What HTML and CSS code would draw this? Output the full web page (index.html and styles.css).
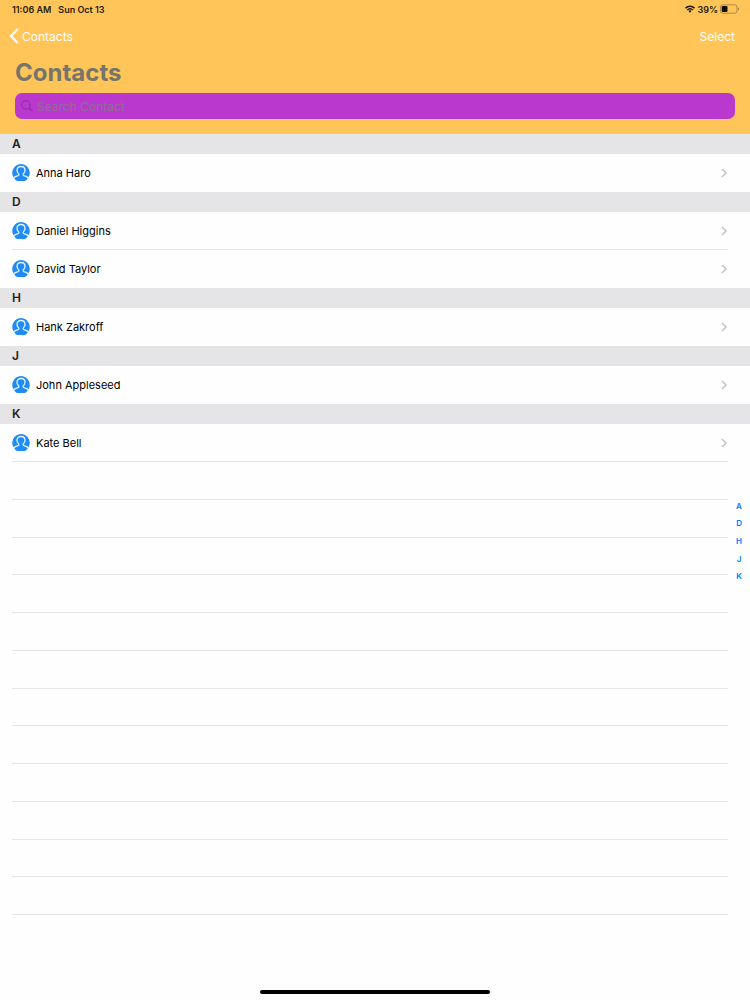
FILE: index.html
```html
<!DOCTYPE html>
<html lang="en">
<head>
  <meta charset="UTF-8" />
  <meta name="viewport" content="width=device-width, initial-scale=1" />
  <title>Contacts</title>
  <link rel="stylesheet" href="styles.css">
</head>
<body>

<!-- Shared icons -->
<svg class="sprite" aria-hidden="true">
  <symbol id="avatar" viewBox="0 0 36 36">
    <path d="M18 0a17.800 17.800 0 0 1 12.500 30q-2 4-5.500 4H11q-3.500 0-5.500-4A17.800 17.800 0 0 1 18 0z" fill="#1f8cf5"/>
    <path d="M3.500 27.500c2-2.800 5.500-3 8.500-4.200 2.800-1.200 2-2.800.5-4.500-1.500-2-2.500-4-2.500-6.500C10 7.800 13.200 5 18 5s8 2.800 8 7.300c0 2.500-1 4.500-2.500 6.500-1.500 1.700-2.300 3.300.5 4.500 3 1.200 6.500 1.400 8.500 4.200" fill="none" stroke="#e4f2ff" stroke-width="2.600"/>
  </symbol>
  <symbol id="chevron" viewBox="0 0 6 10">
    <path d="M1 1l4 4-4 4" fill="none" stroke="#bfbdc5" stroke-width="1.400"/>
  </symbol>
</svg>

<header class="navbar">
  <div class="statusBar">
    <div class="statusLeft">
      <span>11:06 AM</span>
      <span>Sun Oct 13</span>
    </div>
    <div class="statusRight">
      <svg class="wifi" viewBox="0 0 20 16" aria-hidden="true">
        <g fill="none" stroke="#1b1508" stroke-width="3">
          <path d="M1 6.300a13 13 0 0 1 18 0"/>
          <path d="M4.500 10a8 8 0 0 1 11 0"/>
        </g>
        <path d="M7 12.200a4.300 4.300 0 0 1 6 0L10 15.500z" fill="#1b1508"/>
      </svg>
      <span>39%</span>
      <svg class="battery" viewBox="0 0 20 10" aria-hidden="true">
        <rect x="0.500" y="0.800" width="16.500" height="8.400" rx="2.200" fill="none" stroke="#a8823f" stroke-width="0.900"/>
        <rect x="1.700" y="2" width="5.800" height="6" rx="1" fill="#120d02"/>
        <path d="M18 3.500q1.200.3 1.200 1.500t-1.200 1.500z" fill="#a8823f"/>
      </svg>
    </div>
  </div>

  <div class="navActions">
    <button class="navBtn" type="button">
      <svg class="backIcon" viewBox="0 0 10 16" aria-hidden="true">
        <path d="M8.700 1L2 8l6.700 7" fill="none" stroke="#fff" stroke-width="2.200"/>
      </svg>
      Contacts
    </button>
    <button class="navBtn" type="button">Select</button>
  </div>

  <h1>Contacts</h1>

  <label class="search">
    <svg class="searchIcon" viewBox="0 0 12 12" aria-hidden="true">
      <circle cx="5" cy="5" r="4.200" fill="none" stroke="#84309a" stroke-width="1.100"/>
      <path d="M8.100 8.100l3.300 3.300" stroke="#84309a" stroke-width="1.300"/>
    </svg>
    <input type="text" placeholder="Search Contact" aria-label="Search Contact">
  </label>
</header>

<main class="contacts">
  <section>
    <h2 id="A">A</h2>
    <ul>
      <li><svg class="avatar"><use href="#avatar"/></svg><span>Anna Haro</span><svg class="chevron"><use href="#chevron"/></svg></li>
    </ul>
  </section>
  <section>
    <h2 id="D">D</h2>
    <ul>
      <li><svg class="avatar"><use href="#avatar"/></svg><span>Daniel Higgins</span><svg class="chevron"><use href="#chevron"/></svg></li>
      <li><svg class="avatar"><use href="#avatar"/></svg><span>David Taylor</span><svg class="chevron"><use href="#chevron"/></svg></li>
    </ul>
  </section>
  <section>
    <h2 id="H">H</h2>
    <ul>
      <li><svg class="avatar"><use href="#avatar"/></svg><span>Hank Zakroff</span><svg class="chevron"><use href="#chevron"/></svg></li>
    </ul>
  </section>
  <section>
    <h2 id="J">J</h2>
    <ul>
      <li><svg class="avatar"><use href="#avatar"/></svg><span>John Appleseed</span><svg class="chevron"><use href="#chevron"/></svg></li>
    </ul>
  </section>
  <section>
    <h2 id="K">K</h2>
    <ul>
      <li><svg class="avatar"><use href="#avatar"/></svg><span>Kate Bell</span><svg class="chevron"><use href="#chevron"/></svg></li>
    </ul>
  </section>

  <!-- Empty rows below the last contact -->
  <div class="emptyRows">
    <div></div><div></div><div></div><div></div><div></div><div></div>
    <div></div><div></div><div></div><div></div><div></div><div></div>
  </div>

  <!-- Jump index over the right edge of the list -->
  <nav class="letterIndex">
    <a href="#A">A</a>
    <a href="#D">D</a>
    <a href="#H">H</a>
    <a href="#J">J</a>
    <a href="#K">K</a>
  </nav>
</main>

<footer class="homeArea">
  <div class="homeBar"></div>
</footer>

</body>
</html>
```
FILE: styles.css
```css
* { margin: 0; padding: 0; box-sizing: border-box; }

body {
  min-height: 100vh;
  display: flex;
  flex-direction: column;
  font-family: Inter, "Liberation Sans", sans-serif;
  font-size: 11px;
  color: #000;
  background: #fefefe;
}

.sprite {
  position: absolute;
  width: 0;
  height: 0;
}

/* Header */
.navbar {
  padding-bottom: 15px;
  background: #ffc558;
}

.statusBar {
  height: 18px;
  padding: 0 10px 0 12px;
  display: flex;
  align-items: center;
  justify-content: space-between;
  font-size: 9px;
  font-weight: 600;
  color: #2b200b;
}

.statusLeft {
  display: flex;
  gap: 7px;
}

.statusRight {
  display: flex;
  align-items: center;
  gap: 2px;
}

.wifi {
  width: 10px;
  height: 8px;
}

.battery {
  width: 20px;
  height: 10px;
}

.navActions {
  height: 36px;
  padding: 0 15px 0 9px;
  display: flex;
  align-items: center;
  justify-content: space-between;
}

.navBtn {
  display: flex;
  align-items: center;
  gap: 3px;
  border: none;
  background: none;
  font-family: inherit;
  font-size: 12px;
  color: #fff;
  cursor: pointer;
}

.backIcon {
  width: 10px;
  height: 16px;
}

h1 {
  padding: 0 15px;
  font-size: 24px;
  line-height: 38px;
  font-weight: 700;
  color: #777469;
}

.search {
  height: 26px;
  margin: 1px 15px 0;
  padding: 0 6px;
  display: flex;
  align-items: center;
  gap: 4px;
  border-radius: 7px;
  background: #bb38cf;
}

.searchIcon {
  width: 12px;
  height: 12px;
}

.search input {
  flex: 1;
  border: none;
  outline: none;
  background: none;
  font-family: inherit;
  font-size: 12px;
  color: #fff;
}

.search input::placeholder {
  color: #8b7091;
}

/* Contact list */
.contacts {
  flex: 1;
  display: flex;
  flex-direction: column;
  position: relative;
}

h2 {
  padding: 0 12px;
  font-size: 12px;
  line-height: 20px;
  font-weight: 600;
  color: #222;
  background: #e5e4e6;
}

ul {
  list-style: none;
}

li {
  height: 38px;
  margin: 0 22px 0 12px;
  display: flex;
  align-items: center;
  gap: 6px;
  border-bottom: 1px solid transparent;
}

li:not(:last-child),
section:last-of-type li {
  border-bottom-color: #e6e5e8;
}

li span {
  flex: 1;
}

.avatar {
  width: 18px;
  height: 18px;
}

.chevron {
  width: 6px;
  height: 10px;
  margin-right: 1px;
}

.emptyRows {
  flex: 1;
  margin: 0 22px 0 12px;
  display: flex;
  flex-direction: column;
}

.emptyRows div {
  flex: 1;
  border-bottom: 1px solid #e6e5e8;
}

.letterIndex {
  position: absolute;
  top: 363px;
  right: 8px;
  height: 88px;
  display: flex;
  flex-direction: column;
}

.letterIndex a {
  flex: 1;
  display: flex;
  align-items: center;
  justify-content: center;
  font-size: 8px;
  font-weight: 600;
  color: #007aff;
  text-decoration: none;
}

/* Home indicator */
.homeArea {
  height: 85px;
  padding-bottom: 6px;
  display: flex;
  align-items: flex-end;
  justify-content: center;
}

.homeBar {
  width: 230px;
  height: 4px;
  border-radius: 2px;
  background: #000;
}
```
